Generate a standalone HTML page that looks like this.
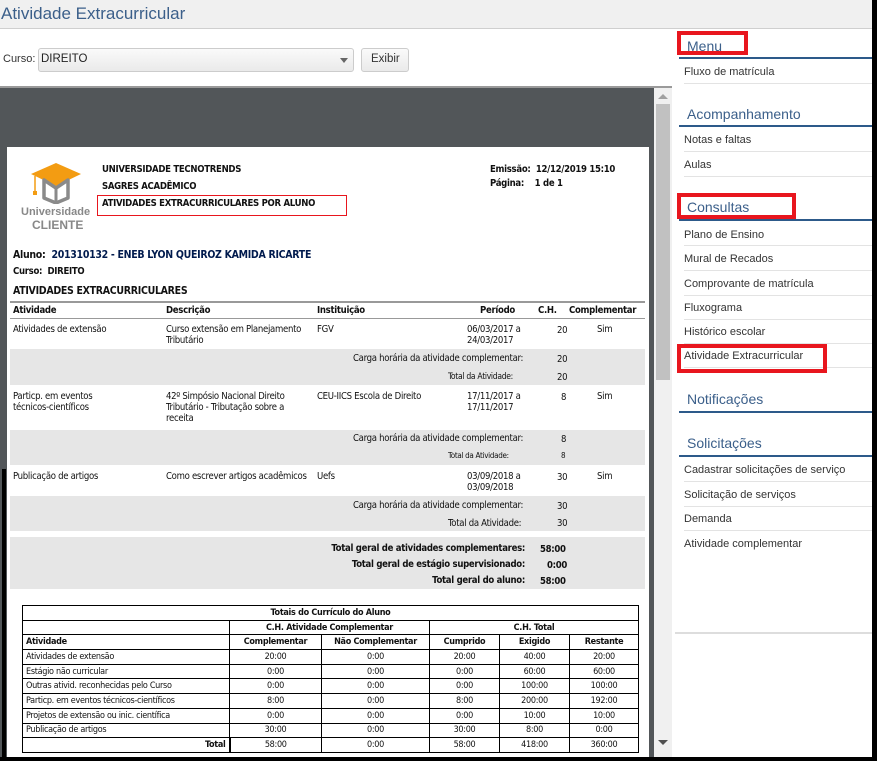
<!DOCTYPE html>
<html><head><meta charset="utf-8"><style>
*{margin:0;padding:0;box-sizing:border-box}
body{width:877px;height:761px;position:relative;overflow:hidden;background:#fff;font-family:"DejaVu Sans","Liberation Sans",sans-serif;color:#111}
.a{position:absolute;white-space:nowrap}
.s{font-family:"Liberation Sans",sans-serif}
.r{font-size:9.5px;font-family:"DejaVu Sans Condensed","DejaVu Sans",sans-serif;letter-spacing:-0.3px}
.b{font-weight:bold}
.g{position:absolute;left:10px;width:635px;background:#e6e6e6}
.mi{position:absolute;left:684px;width:188px;font-family:"Liberation Sans",sans-serif;font-size:11px;color:#333;border-bottom:1px solid #e3e3e3;height:25px}
.mh{position:absolute;left:687px;font-family:"Liberation Sans",sans-serif;font-size:14px;color:#3b5f8a}
.ml{position:absolute;left:679px;width:193px;height:2px;background:#2d5a8a}
.rb{position:absolute;border:4px solid #e8161e}
table{border-collapse:collapse;font-family:"DejaVu Sans Condensed","DejaVu Sans",sans-serif;font-size:9px;letter-spacing:-0.3px}
td{border:1px solid #000;height:14.7px;line-height:12px;padding:0 3px;text-align:center}
td.l{text-align:left}
</style></head><body>
<div class="a" style="left:0;top:0;width:872px;height:29px;background:#f0f0f0;border-bottom:1px solid #cfcfcf"></div>
<div class="a s" style="left:1px;top:4px;font-size:17px;color:#3b5f8a">Atividade Extracurricular</div>
<div class="a s" style="left:3px;top:53px;font-size:11px;color:#333">Curso:</div>
<div class="a" style="left:38px;top:48px;width:316px;height:24px;border:1px solid #ccc;border-radius:3px;background:linear-gradient(#fafafa,#eaeaea)"></div>
<div class="a s" style="left:41px;top:53px;font-size:11.5px;color:#222">DIREITO</div>
<div class="a" style="left:340px;top:58px;border-left:4px solid transparent;border-right:4px solid transparent;border-top:5px solid #666"></div>
<div class="a" style="left:361px;top:48px;width:48px;height:24px;border:1px solid #ccc;border-radius:3px;background:linear-gradient(#fafafa,#eaeaea)"></div>
<div class="a s" style="left:371px;top:53px;font-size:11.5px;color:#333">Exibir</div>
<div class="a" style="left:0;top:86px;width:672px;height:675px;background:#525659;border-top:2px solid #9a9a9a"></div>
<div class="a" style="left:654px;top:88px;width:18px;height:670px;background:#f0f0f0"></div>
<div class="a" style="left:656px;top:104px;width:14px;height:276px;background:#c1c1c1"></div>
<div class="a" style="left:658px;top:94px;border-left:5px solid transparent;border-right:5px solid transparent;border-bottom:5px solid #a0a0a0"></div>
<div class="a" style="left:658px;top:740px;border-left:5px solid transparent;border-right:5px solid transparent;border-top:5px solid #505050"></div>
<div class="a" style="left:7px;top:147px;width:642px;height:614px;background:#fff"></div>
<svg class="a" style="left:28px;top:160px" width="56" height="44" viewBox="0 0 56 44">
<path d="M3 14 L28 3 L53 14 L28 26 Z" fill="#f39c12"/>
<path d="M7 16 V34" stroke="#f39c12" stroke-width="1.5"/><rect x="5" y="31" width="4" height="4" fill="#f39c12"/>
<path d="M16 20 V38 L28 43 L40 38 V20 L28 28 Z" fill="none" stroke="#8a8a8a" stroke-width="3.5" stroke-linejoin="round"/>
<path d="M28 28 V43" stroke="#8a8a8a" stroke-width="3"/>
</svg>
<div class="a s b" style="left:21px;top:206px;font-size:11px;color:#888">Universidade</div>
<div class="a s b" style="left:32px;top:218px;font-size:12px;color:#888">CLIENTE</div>
<div class="a r b" style="left:102px;top:164px">UNIVERSIDADE TECNOTRENDS</div>
<div class="a r b" style="left:102px;top:181px">SAGRES ACADÊMICO</div>
<div class="a r b" style="left:102px;top:198px">ATIVIDADES EXTRACURRICULARES POR ALUNO</div>
<div class="a" style="left:97px;top:195px;width:250px;height:21px;border:1px solid #e8161e"></div>
<div class="a r b" style="left:490px;top:164px">Emissão: &nbsp;12/12/2019 15:10</div>
<div class="a r b" style="left:490px;top:178px">Página: &nbsp;&nbsp;&nbsp;1 de 1</div>
<div class="a r b" style="left:13px;top:249px;font-size:10.5px">Aluno: &nbsp;<span style="color:#001a4d">201310132 - ENEB LYON QUEIROZ KAMIDA RICARTE</span></div>
<div class="a r b" style="left:13px;top:266px">Curso: &nbsp;DIREITO</div>
<div class="a r b" style="left:13px;top:285px;font-size:10.5px">ATIVIDADES EXTRACURRICULARES</div>
<div class="a" style="left:10px;top:301px;width:635px;height:2px;background:#999"></div>
<div class="a r b" style="left:13px;top:305px">Atividade</div>
<div class="a r b" style="left:166px;top:305px">Descrição</div>
<div class="a r b" style="left:317px;top:305px">Instituição</div>
<div class="a r b" style="left:480px;top:305px">Período</div>
<div class="a r b" style="left:538px;top:305px">C.H.</div>
<div class="a r b" style="left:569px;top:305px">Complementar</div>
<div class="a" style="left:10px;top:318px;width:635px;height:1px;background:#999"></div>
<div class="g" style="top:349px;height:36px"></div>
<div class="g" style="top:430px;height:35px"></div>
<div class="g" style="top:496px;height:35px"></div>
<div class="g" style="top:537px;height:52px"></div>
<div class="a r" style="left:13px;top:324px">Atividades de extensão</div>
<div class="a r" style="left:166px;top:324px;line-height:11px">Curso extensão em Planejamento<br>Tributário</div>
<div class="a r" style="left:317px;top:324px">FGV</div>
<div class="a r" style="left:467px;top:324px;line-height:11px">06/03/2017 a<br>24/03/2017</div>
<div class="a r" style="left:557px;top:325px">20</div>
<div class="a r" style="left:597px;top:324px">Sim</div>
<div class="a r" style="left:353px;top:353px">Carga horária da atividade complementar:</div><div class="a r" style="left:557px;top:354px">20</div>
<div class="a r" style="left:448px;top:372px;font-size:8.5px">Total da Atividade:</div><div class="a r" style="left:557px;top:372px">20</div>
<div class="a r" style="left:13px;top:391px;line-height:11px">Particp. em eventos<br>técnicos-científicos</div>
<div class="a r" style="left:166px;top:391px;line-height:11px">42º Simpósio Nacional Direito<br>Tributário - Tributação sobre a<br>receita</div>
<div class="a r" style="left:317px;top:391px">CEU-IICS Escola de Direito</div>
<div class="a r" style="left:467px;top:391px;line-height:11px">17/11/2017 a<br>17/11/2017</div>
<div class="a r" style="left:561px;top:392px">8</div>
<div class="a r" style="left:597px;top:391px">Sim</div>
<div class="a r" style="left:353px;top:433px">Carga horária da atividade complementar:</div><div class="a r" style="left:561px;top:434px">8</div>
<div class="a r" style="left:448px;top:451px;font-size:8px">Total da Atividade:</div><div class="a r" style="left:561px;top:451px;font-size:8px">8</div>
<div class="a r" style="left:13px;top:471px">Publicação de artigos</div>
<div class="a r" style="left:166px;top:471px">Como escrever artigos acadêmicos</div>
<div class="a r" style="left:317px;top:471px">Uefs</div>
<div class="a r" style="left:467px;top:471px;line-height:11px">03/09/2018 a<br>03/09/2018</div>
<div class="a r" style="left:557px;top:472px">30</div>
<div class="a r" style="left:597px;top:471px">Sim</div>
<div class="a r" style="left:353px;top:500px">Carga horária da atividade complementar:</div><div class="a r" style="left:557px;top:501px">30</div>
<div class="a r" style="left:448px;top:518px">Total da Atividade:</div><div class="a r" style="left:557px;top:518px">30</div>
<div class="a r b" style="right:352px;top:543px">Total geral de atividades complementares:</div><div class="a r b" style="left:540px;top:544px">58:00</div>
<div class="a r b" style="right:352px;top:559px">Total geral de estágio supervisionado:</div><div class="a r b" style="left:547px;top:560px">0:00</div>
<div class="a r b" style="right:352px;top:575px">Total geral do aluno:</div><div class="a r b" style="left:540px;top:576px">58:00</div>
<table class="a" style="left:22px;top:605px;width:617px">
<tr><td colspan="6" class="b">Totais do Currículo do Aluno</td></tr>
<tr><td style="width:207px"></td><td colspan="2" class="b">C.H. Atividade Complementar</td><td colspan="3" class="b">C.H. Total</td></tr>
<tr><td class="l b">Atividade</td><td class="b" style="width:92px">Complementar</td><td class="b" style="width:108px">Não Complementar</td><td class="b" style="width:70px">Cumprido</td><td class="b" style="width:70px">Exigido</td><td class="b">Restante</td></tr>
<tr><td class="l">Atividades de extensão</td><td>20:00</td><td>0:00</td><td>20:00</td><td>40:00</td><td>20:00</td></tr>
<tr><td class="l">Estágio não curricular</td><td>0:00</td><td>0:00</td><td>0:00</td><td>60:00</td><td>60:00</td></tr>
<tr><td class="l">Outras ativid. reconhecidas pelo Curso</td><td>0:00</td><td>0:00</td><td>0:00</td><td>100:00</td><td>100:00</td></tr>
<tr><td class="l">Particp. em eventos técnicos-científicos</td><td>8:00</td><td>0:00</td><td>8:00</td><td>200:00</td><td>192:00</td></tr>
<tr><td class="l">Projetos de extensão ou inic. científica</td><td>0:00</td><td>0:00</td><td>0:00</td><td>10:00</td><td>10:00</td></tr>
<tr><td class="l">Publicação de artigos</td><td>30:00</td><td>0:00</td><td>30:00</td><td>8:00</td><td>0:00</td></tr>
<tr><td class="b" style="text-align:right;border-right:2px solid #000">Total</td><td>58:00</td><td>0:00</td><td>58:00</td><td>418:00</td><td>360:00</td></tr>
</table>
<div class="mh" style="top:38px">Menu</div><div class="rb" style="left:677px;top:31px;width:71px;height:24px"></div>
<div class="ml" style="top:57px"></div>
<div class="mi" style="top:59px;padding-top:7px">Fluxo de matrícula</div>
<div class="mh" style="top:106px">Acompanhamento</div><div class="ml" style="top:125px"></div>
<div class="mi" style="top:127px;padding-top:7px">Notas e faltas</div>
<div class="mi" style="top:152px;padding-top:7px">Aulas</div>
<div class="mh" style="top:199px">Consultas</div><div class="rb" style="left:677px;top:193px;width:119px;height:26px"></div>
<div class="ml" style="top:219px"></div>
<div class="mi" style="top:221px;padding-top:8px">Plano de Ensino</div>
<div class="mi" style="top:246px;padding-top:7px">Mural de Recados</div>
<div class="mi" style="top:271px;padding-top:7px">Comprovante de matrícula</div>
<div class="mi" style="top:295px;padding-top:7px">Fluxograma</div>
<div class="mi" style="top:319px;padding-top:7px">Histórico escolar</div>
<div class="mi" style="top:343px;padding-top:7px">Atividade Extracurricular</div>
<div class="rb" style="left:677px;top:344px;width:150px;height:29px"></div>
<div class="mh" style="top:391px">Notificações</div><div class="ml" style="top:411px"></div>
<div class="mh" style="top:435px">Solicitações</div><div class="ml" style="top:455px"></div>
<div class="mi" style="top:457px;padding-top:7px">Cadastrar solicitações de serviço</div>
<div class="mi" style="top:482px;padding-top:7px">Solicitação de serviços</div>
<div class="mi" style="top:506px;padding-top:7px">Demanda</div>
<div class="mi" style="top:530px;padding-top:8px;border:none">Atividade complementar</div>
<div class="a" style="left:675px;top:632px;width:197px;height:2px;background:#ddd"></div>
<div class="a" style="left:872px;top:0;width:5px;height:761px;background:#000"></div>
<div class="a" style="left:0;top:757px;width:877px;height:4px;background:#000"></div>
<div class="a" style="left:2px;top:469px;width:4px;height:292px;background:#000"></div>
</body></html>
